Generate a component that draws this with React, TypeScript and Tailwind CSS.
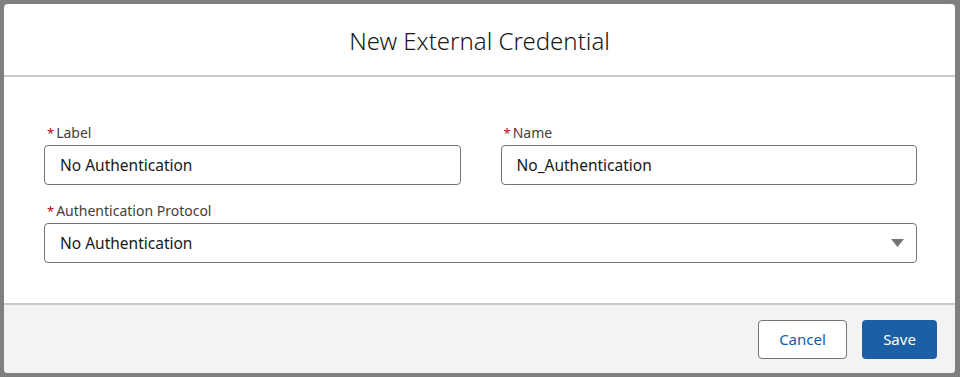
import React from "react";

const font = { fontFamily: '"Noto Sans", "Open Sans", Arial, sans-serif' };

function Label({ text }: { text: string }) {
  return (
    <div className="flex items-center h-[20px] mb-[2px] pl-[3px] text-[14px] text-[#3e3e3c] leading-[20px]">
      <span className="text-[#ba0517] text-[13px] mr-[2px]">*</span>
      <span>{text}</span>
    </div>
  );
}

function Input({ value }: { value: string }) {
  return (
    <div className="h-[40px] border border-[#747474] rounded-[4px] flex items-center px-[15px] pt-[2px] text-[15.5px] text-[#181818] bg-white">
      {value}
    </div>
  );
}

export default function App() {
  return (
    <div className="w-[960px] h-[377px] bg-[#7f7f7f] pt-[4px] pl-[4px] pr-[5px] pb-[4px]" style={font}>
      <div className="w-full h-full bg-white rounded-[4px] flex flex-col overflow-hidden">
        <div className="h-[73px] shrink-0 flex items-center justify-center border-b-2 border-[#c9c9c9]">
          <h1 className="text-[24px] font-light text-[#181818] leading-none pt-[2px]">New External Credential</h1>
        </div>
        <div className="h-[226px] shrink-0 pt-[46px] pl-[40px] pr-[38px]">
          <div className="grid grid-cols-2 gap-x-[40px]">
            <div>
              <Label text="Label" />
              <Input value="No Authentication" />
            </div>
            <div>
              <Label text="Name" />
              <Input value="No_Authentication" />
            </div>
          </div>
          <div className="mt-[16px]">
            <Label text="Authentication Protocol" />
            <div className="h-[40px] border border-[#747474] rounded-[4px] flex items-center justify-between pl-[15px] pr-[12px] text-[15.5px] text-[#181818]">
              <span className="pt-[2px]">No Authentication</span>
              <svg width="13" height="8" viewBox="0 0 13 8">
                <polygon points="0,0 13,0 6.5,8" fill="#747474" />
              </svg>
            </div>
          </div>
        </div>
        <div className="flex-1 bg-[#f3f3f3] border-t-2 border-[#c9c9c9] flex items-center justify-end pr-[18px] gap-[15px]">
          <button className="h-[39px] w-[89px] border border-[#747474] rounded-[4px] bg-white text-[#0b5cab] text-[15px]">
            Cancel
          </button>
          <button className="h-[39px] w-[75px] rounded-[4px] bg-[#1b5fa5] text-white text-[15px]">
            Save
          </button>
        </div>
      </div>
    </div>
  );
}
